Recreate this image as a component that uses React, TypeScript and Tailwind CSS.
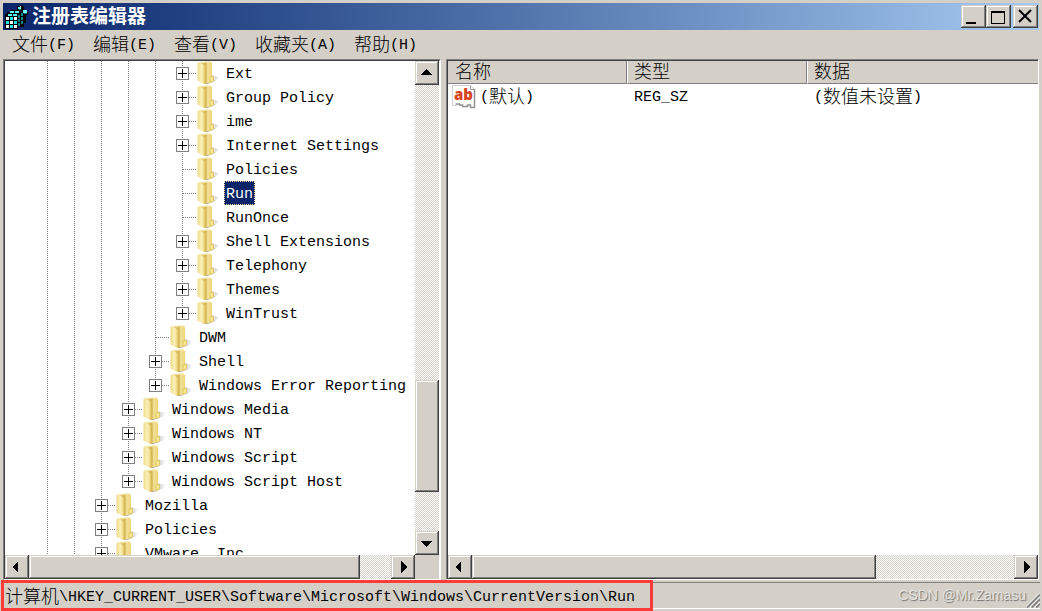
import React from "react";

const cx = (...names: (string | false | undefined)[]) => names.filter(Boolean).join(" ");

const raised =
  "bg-[#d4d0c8] shadow-[inset_-1px_-1px_0_#404040,inset_1px_1px_0_#d4d0c8,inset_-2px_-2px_0_#808080,inset_2px_2px_0_#ffffff]";
const sunken =
  "border border-t-[#808080] border-l-[#808080] border-r-white border-b-white";
const sunkenInner =
  "border-t border-l border-[#404040]";
const track =
  "bg-[repeating-conic-gradient(#d4d0c8_0%_25%,#ffffff_0%_50%)] bg-[length:2px_2px]";

/* CJK glyphs are set at 18px, half-width Latin at 15px so each takes 9px. */
function Mixed({ text }: { text: string }) {
  const parts = text.match(/[\u4e00-\u9fff]+|[^\u4e00-\u9fff]+/g) ?? [];
  return (
    <>
      {parts.map((part, i) => (
        <span key={i} className={/[\u4e00-\u9fff]/.test(part) ? "text-[18px]" : "text-[15px]"}>
          {part}
        </span>
      ))}
    </>
  );
}

function RegistryIcon() {
  return (
    <svg width="24" height="24" viewBox="0 0 24 24" shapeRendering="crispEdges" aria-hidden="true">
      <path d="M0 9h2V7h3V5h10v2h3v12h-2v3h-3v2H0z" fill="#000" />
      <path d="M12 1h3V0h2v1h2v4h3v2h1v3h-2v8h-2v4h-3V6h-4z" fill="#000" />
      <path d="M5 6h4v2H5zM10 6h4v2h-4zM3 9h4v2H3zM8 9h4v2H8z" fill="#5ff" />
      <path d="M1 12h3v3H1zM9 12h3v3H9zM5 16h3v3H5zM1 20h3v3H1zM9 20h3v3H9z" fill="#fff" />
      <path d="M5 12h3v3H5zM1 16h3v3H1zM9 16h3v3H9zM5 20h3v3H5z" fill="#1fe5e5" />
      <path d="M13 10h2v3h-2zM13 14h2v3h-2zM13 18h2v3h-2zM16 8h2v3h-2zM16 12h2v3h-2zM16 16h2v3h-2z" fill="#00898c" />
      <path d="M13 2h3v2h-3zM18 5h4v3h-4z" fill="#6ff" />
      <path d="M14 4h2v1h-2zM19 8h3v1h-3z" fill="#008080" />
      <path d="M15 1h1v1h-1zM20 5h1v1h-1z" fill="#fff" />
    </svg>
  );
}

function FolderIcon() {
  return (
    <svg width="24" height="24" viewBox="0 0 24 24" className="shrink-0" aria-hidden="true">
      <defs>
        <linearGradient id="cover" x1="0" x2="1" y1="0" y2="0">
          <stop offset="0" stopColor="#efd985" />
          <stop offset="0.5" stopColor="#fbf2bb" />
          <stop offset="1" stopColor="#ecd277" />
        </linearGradient>
        <linearGradient id="body" x1="0" x2="1" y1="0" y2="0">
          <stop offset="0" stopColor="#f0dc90" />
          <stop offset="0.45" stopColor="#d3b550" />
          <stop offset="0.6" stopColor="#f3e29c" />
          <stop offset="1" stopColor="#ebd06c" />
        </linearGradient>
        <linearGradient id="shade" x1="0" x2="1" y1="0" y2="0">
          <stop offset="0" stopColor="#808080" stopOpacity="0.8" />
          <stop offset="1" stopColor="#c0c0c0" stopOpacity="0.2" />
        </linearGradient>
      </defs>
      <path d="M9 23l7-9 7 2-3 4-8 3z" fill="url(#shade)" />
      <path d="M4 1.500L14.500.700 16 2v13.500l1 .5v4.500l-2.500 1L8 23z" fill="url(#body)" />
      <path d="M14 16l3.500-.5v4.500L14 21.500z" fill="#f9e88e" stroke="#dcbc50" strokeWidth=".7" />
      <path d="M1.500 2l2-.8 5.500 4V22l-1.500 1-6-3.500z" fill="url(#cover)" />
      <path d="M9 5v17.500" stroke="#d9bc5c" strokeWidth=".8" />
      <path d="M3 1.500L14 .800l1.800 1.200" fill="none" stroke="#f5e7a8" />
    </svg>
  );
}

function StringIcon() {
  return (
    <svg width="24" height="24" viewBox="0 0 24 24" className="shrink-0" aria-hidden="true">
      <path d="M.5.500h18l4 4v18h-4v-2h-3v1h-4v-1h-3v-1h-4v1h-4z" fill="#fff" stroke="#d0d0d0" />
      <path d="M18.500.500v4h4" fill="none" stroke="#a0a0a0" />
      <path d="M22.500 4v18.500h-4v-2.500h-3v1.500h-5v-1.500h-3v-1h-4" fill="none" stroke="#929292" strokeWidth="1.500" />
      <text x="2" y="15" fontSize="15" fontWeight="800" fontFamily="Open Sans, sans-serif" fill="#d9441f">
        ab
      </text>
    </svg>
  );
}

type Node = {
  name: string;
  depth: number;
  leaf?: boolean;
  last?: boolean;
  selected?: boolean;
};

const nodes: Node[] = [
  { name: "Ext", depth: 5 },
  { name: "Group Policy", depth: 5 },
  { name: "ime", depth: 5 },
  { name: "Internet Settings", depth: 5 },
  { name: "Policies", depth: 5, leaf: true },
  { name: "Run", depth: 5, leaf: true, selected: true },
  { name: "RunOnce", depth: 5, leaf: true },
  { name: "Shell Extensions", depth: 5 },
  { name: "Telephony", depth: 5 },
  { name: "Themes", depth: 5 },
  { name: "WinTrust", depth: 5, last: true },
  { name: "DWM", depth: 4, leaf: true },
  { name: "Shell", depth: 4 },
  { name: "Windows Error Reporting", depth: 4, last: true },
  { name: "Windows Media", depth: 3 },
  { name: "Windows NT", depth: 3 },
  { name: "Windows Script", depth: 3 },
  { name: "Windows Script Host", depth: 3, last: true },
  { name: "Mozilla", depth: 2 },
  { name: "Policies", depth: 2 },
  { name: "VMware, Inc.", depth: 2 },
];

function Guide() {
  return (
    <svg width="27" height="24" className="shrink-0" shapeRendering="crispEdges" aria-hidden="true">
      <path d="M13.500 0v24" stroke="#808080" strokeDasharray="1 1" />
    </svg>
  );
}

function Branch({ leaf, last }: { leaf?: boolean; last?: boolean }) {
  return (
    <svg width="27" height="24" className="shrink-0" shapeRendering="crispEdges" aria-hidden="true">
      <path d={last ? "M13.500 0v12" : "M13.500 0v24"} stroke="#808080" strokeDasharray="1 1" />
      <path d="M14 12.500h13" stroke="#808080" strokeDasharray="1 1" />
      {!leaf && (
        <>
          <rect x="7.500" y="6.500" width="12" height="12" fill="#fff" stroke="#808080" />
          <path d="M9 12.500h9M13.500 8v9" stroke="#000" />
        </>
      )}
    </svg>
  );
}

function TreeRow({ node }: { node: Node }) {
  return (
    <li role="treeitem" aria-selected={!!node.selected} className="flex h-6 items-center">
      {Array.from({ length: node.depth }, (_, i) => (
        <Guide key={i} />
      ))}
      <Branch leaf={node.leaf} last={node.last} />
      <FolderIcon />
      <span
        className={cx(
          "ml-1 h-6 px-0.5 text-[15px] leading-[27px] whitespace-pre",
          node.selected && "bg-[#0a246a] text-white outline-1 -outline-offset-1 outline-dotted outline-[#f5db95]",
        )}
      >
        {node.name}
      </span>
    </li>
  );
}

const arrows = {
  up: "M5 14h12l-6-6z",
  down: "M5 10h12l-6 6z",
  left: "M13 6v12l-6-6z",
  right: "M10 6v12l6-6z",
};

function ScrollButton({ dir }: { dir: keyof typeof arrows }) {
  return (
    <button type="button" aria-label={"Scroll " + dir} className={cx("size-6 shrink-0", raised)}>
      <svg width="24" height="24" viewBox="0 0 24 24" shapeRendering="crispEdges" aria-hidden="true">
        <path d={arrows[dir]} fill="#000" />
      </svg>
    </button>
  );
}

function WindowButton({ label, children }: { label: string; children: React.ReactNode }) {
  return (
    <button type="button" aria-label={label} className={cx("h-[23px] w-[25px]", raised)}>
      <svg width="25" height="23" viewBox="0 0 25 23" fill="none" stroke="#000" strokeWidth="2" shapeRendering="crispEdges" aria-hidden="true">
        {children}
      </svg>
    </button>
  );
}

const menus = ["文件(F)", "编辑(E)", "查看(V)", "收藏夹(A)", "帮助(H)"];

export default function App() {
  return (
    <div className="flex h-screen flex-col bg-[#d4d0c8] px-[3px] pt-[3px] font-['Liberation_Mono','Noto_Sans_CJK_SC',monospace] font-light text-black">
      <header className="flex h-[27px] shrink-0 items-center bg-linear-to-r from-[#0a246a] to-[#a6caf0] pr-px pl-0.5">
        <RegistryIcon />
        <h1 className="ml-[3px] flex-1 pt-0.5 text-[19px] leading-6 font-bold text-white">注册表编辑器</h1>
        <div className="flex">
          <WindowButton label="Minimize">
            <path d="M5 18h10" />
          </WindowButton>
          <WindowButton label="Maximize">
            <path d="M5 7h14" />
            <path d="M5.500 7v11.500h13V7" strokeWidth="1" />
          </WindowButton>
          <div className="ml-0.5 flex">
            <WindowButton label="Close">
              <path d="M6 5l12 12M18 5L6 17" shapeRendering="auto" />
            </WindowButton>
          </div>
        </div>
      </header>

      <nav className="flex h-[29px] shrink-0 items-center gap-[18px] pt-0.5 pl-[9px]">
        {menus.map((m) => (
          <button key={m} type="button" className="flex items-center leading-7 whitespace-nowrap">
            <Mixed text={m} />
          </button>
        ))}
      </nav>

      <main className="flex min-h-0 flex-1 gap-[5px]">
        <section className={cx("flex w-[43%] max-w-[438px] shrink-0", sunken)}>
          <div className={cx("flex min-w-0 flex-1 flex-col border-r border-r-white bg-[#d4d0c8]", sunkenInner)}>
            <div className="flex min-h-0 flex-1">
              <ul role="tree" className="min-w-0 flex-1 overflow-hidden bg-white pl-[29px]">
                {nodes.map((n, i) => (
                  <TreeRow key={i} node={n} />
                ))}
              </ul>
              <div className={cx("flex w-6 flex-col", track)}>
                <ScrollButton dir="up" />
                <div className="flex-[295]" />
                <div className={cx("flex-[112]", raised)} />
                <div className="flex-[39]" />
                <ScrollButton dir="down" />
              </div>
            </div>
            <div className="flex pr-6">
              <div className={cx("flex h-6 flex-1", track)}>
                <ScrollButton dir="left" />
                <div className={cx("flex-[331]", raised)} />
                <div className="flex-[31]" />
                <ScrollButton dir="right" />
              </div>
            </div>
          </div>
        </section>

        <section className={cx("flex min-w-0 flex-1", sunken)}>
          <div className={cx("flex min-w-0 flex-1 flex-col bg-white", sunkenInner)}>
            <div className="min-h-0 flex-1 overflow-hidden">
              <table className="w-full table-fixed border-separate border-spacing-0 text-left">
                <colgroup>
                  <col className="w-[179px]" />
                  <col className="w-[180px]" />
                  <col />
                </colgroup>
                <thead className="bg-[#d4d0c8] text-[18px] leading-5">
                  <tr>
                    <th className="border-r border-b border-[#808080] p-0 pt-0.5 pl-[7px] font-light">名称</th>
                    <th className="border-r border-b border-l border-[#808080] border-l-white p-0 pt-0.5 pl-1.5 font-light">类型</th>
                    <th className="border-b border-l border-[#808080] border-l-white p-0 pt-0.5 pl-1.5 font-light">数据</th>
                  </tr>
                </thead>
                <tbody>
                  <tr className="h-[26px]">
                    <td className="p-0 pl-1">
                      <span className="flex items-center gap-1 leading-6">
                        <StringIcon />
                        <span className="flex items-center pt-0.5">
                          <Mixed text="(默认)" />
                        </span>
                      </span>
                    </td>
                    <td className="p-0 pt-0.5 pl-[7px] text-[15px] leading-6">REG_SZ</td>
                    <td className="p-0 pt-0.5 pl-[7px]">
                      <span className="flex items-center leading-6">
                        <Mixed text="(数值未设置)" />
                      </span>
                    </td>
                  </tr>
                </tbody>
              </table>
            </div>
            <div className={cx("flex h-6", track)}>
              <ScrollButton dir="left" />
              <div className={cx("flex-[404]", raised)} />
              <div className="flex-[138]" />
              <ScrollButton dir="right" />
            </div>
          </div>
        </section>
      </main>

      <footer className="-mx-[3px] flex h-[31px] shrink-0 items-stretch">
        <div className="ml-px flex w-[652px] items-center border-3 border-[#fb3b38] pt-1 pl-px leading-6 whitespace-nowrap">
          <Mixed text="计算机\HKEY_CURRENT_USER\Software\Microsoft\Windows\CurrentVersion\Run" />
        </div>
        <div className="mt-0.5 mr-0.5 mb-0.5 flex flex-1 items-end justify-end border-t border-b border-t-[#808080] border-b-white">
          <span className="self-center font-['Liberation_Sans',sans-serif] text-[14px] text-[#e4e2de] [text-shadow:1px_1px_1px_#707070]">
            CSDN @Mr.Zamasu
          </span>
          <svg width="14" height="15" viewBox="0 0 15 15" aria-hidden="true">
            <path d="M1 15L15 1M6 15l9-9M11 15l4-4" stroke="#808080" strokeWidth="2" />
            <path d="M-1 15L15-1M4 15L15 4M9 15l6-6" stroke="#fff" />
          </svg>
        </div>
      </footer>
    </div>
  );
}
